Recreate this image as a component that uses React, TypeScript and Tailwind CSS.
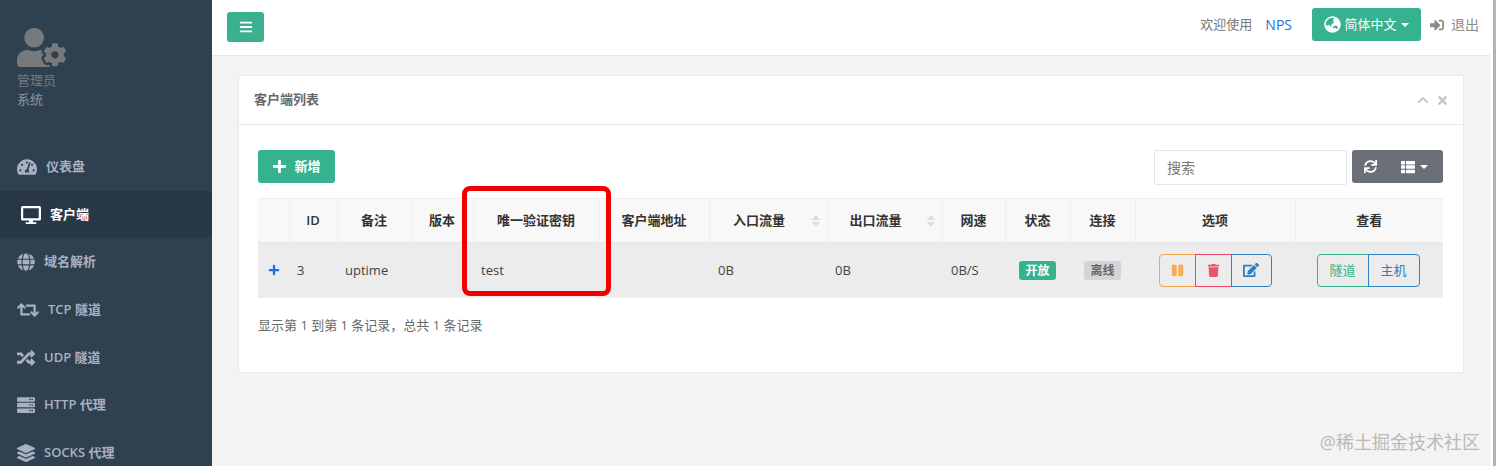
import React from "react";
import {
  FaBars, FaChevronUp, FaDesktop, FaEdit, FaGlobe, FaGlobeAsia, FaLayerGroup, FaPause, FaPlus, FaRandom,
  FaRetweet, FaServer, FaSignInAlt, FaSort, FaSync, FaTachometerAlt, FaThList, FaTimes, FaTrash, FaUserCog,
} from "react-icons/fa";

const font = "font-['Open_Sans','Noto_Sans_CJK_SC',sans-serif]";

const nav = [
  { icon: FaTachometerAlt, size: 20, label: "仪表盘", h: "h-[48px]" },
  { icon: FaDesktop, size: 20, label: "客户端", h: "h-[47px]", active: true },
  { icon: FaGlobe, size: 18, label: "域名解析", h: "h-[48px]" },
  { icon: FaRetweet, size: 22, label: "TCP 隧道", h: "h-[48px]" },
  { icon: FaRandom, size: 18, label: "UDP 隧道", h: "h-[48px]" },
  { icon: FaServer, size: 18, label: "HTTP 代理", h: "h-[46px]" },
  { icon: FaLayerGroup, size: 18, label: "SOCKS 代理", h: "h-[49px]" },
];

function Sidebar() {
  return (
    <aside className="w-[212px] shrink-0 bg-[#2f4050] h-[466px] overflow-hidden">
      <div className="h-[143px] pl-[17px] pt-[26px]">
        <FaUserCog size={49} color="#77797b" className="-mt-[3px]" />
        <div className="text-[13px] leading-[20px] text-[#77797b] -mt-[2px]">管理员</div>
        <div className="text-[13px] leading-[20px] text-[#8c96a0] -mt-[1px]">系统</div>
      </div>
      {nav.map((n) => {
        const I = n.icon;
        return (
          <div
            key={n.label}
            className={`flex items-center gap-[9px] font-semibold text-[13px] ${n.h} ${
              n.active ? "bg-[#293846] text-white pl-[21px]" : "text-[#a7b1c2] pl-[17px]"
            }`}
          >
            <span className={`flex items-center ${n.active ? "w-[20px]" : n.size === 22 ? "w-[22px]" : n.size === 20 ? "w-[20px]" : "w-[18px]"}`}>
              <I size={n.size} />
            </span>
            <span>{n.label}</span>
          </div>
        );
      })}
    </aside>
  );
}

function TopBar() {
  return (
    <header className="h-[56px] bg-white border-b border-[#e7eaec] flex items-center pl-[15px] pr-[11px]">
      <button className="w-[37px] h-[30px] -mt-[1px] bg-[#3bb08f] rounded-[3px] flex items-center justify-center text-white">
        <FaBars size={14} />
      </button>
      <div className="ml-auto flex items-center text-[13px] pb-[6px]">
        <span className="text-[#777]">欢迎使用</span>
        <span className="text-[#1a73d9] text-[14px] ml-[13px]">NPS</span>
        <button className="ml-[20px] w-[109px] h-[33px] bg-[#36b28f] rounded-[3px] flex items-center justify-center gap-[3px] text-white">
          <FaGlobeAsia size={17} />
          <span>简体中文</span>
          <span className="w-0 h-0 border-x-[4px] border-x-transparent border-t-[4px] border-t-white ml-[1px]" />
        </button>
        <span className="ml-[9px] flex items-center gap-[7px] text-[#8a8a8a] text-[14px]">
          <FaSignInAlt size={14} />
          <span>退出</span>
        </span>
      </div>
    </header>
  );
}

const heads: [string, number, boolean?][] = [
  ["", 31], ["ID", 48], ["备注", 74], ["版本", 62], ["唯一验证密钥", 126], ["客户端地址", 110],
  ["入口流量", 118, true], ["出口流量", 115, true], ["网速", 63], ["状态", 65], ["连接", 65], ["选项", 160], ["查看", 148],
];

function DataTable() {
  return (
    <table className="w-[1185px] table-fixed border-collapse text-[13px]">
      <colgroup>
        {heads.map(([h, w], i) => (
          <col key={i} style={{ width: w }} />
        ))}
      </colgroup>
      <thead>
        <tr className="h-[44px] bg-[#f8f8f8] border-b border-[#e3e5e6] border-t border-t-[#eeeeee]">
          {heads.map(([h, , sort], i) => (
            <th key={i} className={`relative font-semibold text-[#333] text-center p-0 ${sort ? "pr-[18px]" : ""} ${i > 0 ? "border-l border-[#eeeeee]" : ""}`}>
              <span>{h}</span>
              {sort && <FaSort size={14} className="absolute right-[4px] top-[15px] text-[#dedede]" />}
            </th>
          ))}
        </tr>
      </thead>
      <tbody>
        <tr className="h-[55px] bg-[#ececec] text-[#444]">
          <td className="p-0 pl-[10px] text-[#1a73d9]"><FaPlus size={12} /></td>
          <td className="p-0 pl-[8px]">3</td>
          <td className="p-0 pl-[8px]">uptime</td>
          <td className="p-0" />
          <td className="p-0 pl-[8px]">test</td>
          <td className="p-0" />
          <td className="p-0 pl-[9px]">0B</td>
          <td className="p-0 pl-[8px]">0B</td>
          <td className="p-0 pl-[9px]">0B/S</td>
          <td className="p-0 text-center">
            <span className="inline-block bg-[#36b28f] text-white text-[12px] font-semibold leading-[19px] px-[6px] rounded-[3px]">开放</span>
          </td>
          <td className="p-0 text-center">
            <span className="inline-block bg-[#d1d5d8] text-[#666] text-[12px] font-semibold leading-[19px] px-[6px] rounded-[3px]">离线</span>
          </td>
          <td className="p-0">
            <div className="flex justify-center">
              <span className="w-[37px] h-[33px] flex items-center justify-center border border-[#f3a64b] rounded-l-[4px] text-[#f8ac59]"><FaPause size={13} /></span>
              <span className="w-[37px] h-[33px] -ml-[1px] flex items-center justify-center border border-[#e4476a] text-[#ed5565]"><FaTrash size={13} /></span>
              <span className="w-[41px] h-[33px] -ml-[1px] flex items-center justify-center border border-[#2f83c4] rounded-r-[4px] text-[#2b7fc0]"><FaEdit size={16} /></span>
            </div>
          </td>
          <td className="p-0">
            <div className="flex justify-center pr-[2px] text-[13px]">
              <span className="w-[52px] h-[33px] flex items-center justify-center border border-[#36b28f] rounded-l-[4px] text-[#36b28f]">隧道</span>
              <span className="w-[52px] h-[33px] -ml-[1px] flex items-center justify-center border border-[#2f83c4] rounded-r-[4px] text-[#2b7fc0]">主机</span>
            </div>
          </td>
        </tr>
      </tbody>
    </table>
  );
}

function Panel() {
  return (
    <section className="relative w-[1226px] h-[298px] bg-white border border-[#e7eaec]">
      <div className="h-[49px] border-b border-[#e7eaec] flex items-center pl-[15px] pr-[14px]">
        <span className="text-[13px] font-semibold text-[#676a6c]">客户端列表</span>
        <span className="ml-auto flex items-center gap-[7px] text-[#c4c6c8]">
          <FaChevronUp size={12} />
          <FaTimes size={13} />
        </span>
      </div>
      <div className="pl-[19px] pt-[25px]">
        <div className="flex items-start justify-between w-[1185px] h-[35px]">
          <button className="w-[77px] h-[33px] bg-[#36b28f] rounded-[3px] flex items-center justify-center gap-[7px] text-white text-[13px] font-semibold">
            <FaPlus size={15} />
            <span>新增</span>
          </button>
          <div className="flex items-start gap-[5px]">
            <div className="w-[193px] h-[35px] border border-[#e5e6e7] rounded-[2px] bg-white flex items-center pl-[12px] text-[14px] text-[#777]">搜索</div>
            <div className="w-[91px] h-[33px] bg-[#6b6f78] rounded-[3px] flex items-center text-white pl-[12px]">
              <FaSync size={13} />
              <FaThList size={14} className="ml-[24px]" />
              <span className="ml-[5px] w-0 h-0 border-x-[4px] border-x-transparent border-t-[4px] border-t-white" />
            </div>
          </div>
        </div>
        <div className="mt-[13px]">
          <DataTable />
        </div>
        <div className="mt-[18px] text-[13px] text-[#676a6c]">显示第 1 到第 1 条记录，总共 1 条记录</div>
      </div>
      <div className="absolute left-[223px] top-[110px] w-[149px] h-[110px] border-[5px] border-[#f00000] rounded-[8px] pointer-events-none" />
    </section>
  );
}

export default function App() {
  return (
    <div className={`relative flex w-[1496px] h-[466px] overflow-hidden bg-[#f3f3f4] ${font}`}>
      <Sidebar />
      <main className="flex-1 min-w-0 pr-[3px] bg-white border-r-[3px] border-r-[#b4b4b4]">
        <div className="bg-[#f3f3f4] h-full">
          <TopBar />
          <div className="pl-[26px] pt-[19px]">
            <Panel />
          </div>
        </div>
      </main>
      <span className="absolute right-[16px] bottom-[10px] text-[18px] text-[#b9b9b9]">@稀土掘金技术社区</span>
    </div>
  );
}
